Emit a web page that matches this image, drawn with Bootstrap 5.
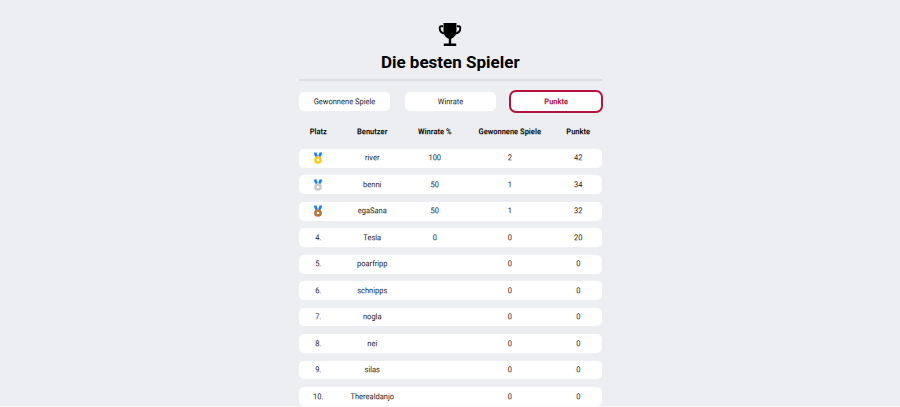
<!DOCTYPE html>
<html lang="de">
<head>
<meta charset="utf-8">
<meta name="viewport" content="width=device-width, initial-scale=1">
<title>Die besten Spieler</title>
<link href="https://cdn.jsdelivr.net/npm/bootstrap@5.3.0/dist/css/bootstrap.min.css" rel="stylesheet">
<style>
html, body { height: 407px; overflow: hidden; background: #fafafb; }
body { font-family: Roboto, sans-serif; font-size: 7.5px; color: #222; }
.page { height: 406px; background: #edeef2; padding-top: 22px; overflow: hidden; }
.board { width: 302.5px; margin-left: 299px; }
.trophy { display: block; margin: 0 auto; width: 24px; height: 25px; }
.title { font-size: 17px; line-height: 20px; margin: 5px 0 0; padding-bottom: 7px; font-weight: 700; color: #000; }
.rule { height: 2px; background: #dcdde1; }
.tabs { margin-top: 11.2px; height: 19px; }
.tab-btn { --bs-btn-bg: #fff; --bs-btn-color: #222; --bs-btn-hover-bg: #fff; width: 91px; height: 19px; padding: 0; font-size: 7.5px; line-height: 18px; border-radius: 5px; border: 0; }
.tab-btn.chosen { color: #b3133d; font-weight: 700; background: #fff; box-shadow: 0 0 0 2px #b3133d; width: 90.5px; margin-right: .5px; }
.tab-btn span, .line .txt { display: block; transform: rotate(.03deg) scaleY(1.09); }
.line { display: grid; grid-template-columns: 38.5px 68.5px 57.5px 91.5px 46.5px; align-items: center; text-align: center; height: 18.8px; }
.heads { margin-top: 11.8px; font-weight: 700; color: #111; height: 18px; }
.rows { margin-top: 7.8px; gap: 7.7px; }
.rows .line { background: #fff; border-radius: 5px; line-height: 18px; }
.medal { display: block; margin: 0 auto; width: 10px; height: 12px; }
.gold { color: #fcca17; } .silver { color: #c8c8ca; } .bronze { color: #b77435; }
</style>
</head>
<body>
<svg class="d-none">
<symbol id="medal" viewBox="0 0 10 12"><path d="M.8.7 3.300.3 4.700 3.700 3.700 5 2.100 4.600ZM9.200.7 6.700.3 5.300 3.700 6.300 5 7.900 4.600Z" fill="#1380f5"/><circle cx="5" cy="8" r="2.600" fill="#fff" stroke="currentColor" stroke-width="2.500"/></symbol>
</svg>
<main class="page">
<div class="board">
<svg class="trophy" viewBox="0 0 24 25"><path d="M5 4.300H3Q1.700 4.300 1.700 6C1.700 9.500 3.500 11.300 7.500 11.800M19 4.300H21Q22.300 4.300 22.300 6C22.300 9.500 20.500 11.300 16.500 11.800" fill="none" stroke="#000" stroke-width="1.900"/><path d="M5.500 1h13v7c0 4.500-2 7.800-5.300 8.700V21.500h5V24H5.800v-2.500h5v-4.800C7.500 15.800 5.500 12.500 5.500 8Z" fill="#000"/></svg>
<h1 class="title text-center">Die besten Spieler</h1>
<div class="rule"></div>
<div class="tabs d-flex justify-content-between">
<button class="btn tab-btn" type="button"><span>Gewonnene Spiele</span></button>
<button class="btn tab-btn" type="button"><span>Winrate</span></button>
<button class="btn tab-btn chosen" type="button"><span>Punkte</span></button>
</div>
<div class="line heads"><span class="txt">Platz</span><span class="txt">Benutzer</span><span class="txt">Winrate %</span><span class="txt">Gewonnene Spiele</span><span class="txt">Punkte</span></div>
<div class="rows d-flex flex-column">
<div class="line"><span><svg class="medal gold"><use href="#medal"/></svg></span><span class="txt">river</span><span class="txt">100</span><span class="txt">2</span><span class="txt">42</span></div>
<div class="line"><span><svg class="medal silver"><use href="#medal"/></svg></span><span class="txt">benni</span><span class="txt">50</span><span class="txt">1</span><span class="txt">34</span></div>
<div class="line"><span><svg class="medal bronze"><use href="#medal"/></svg></span><span class="txt">egaSana</span><span class="txt">50</span><span class="txt">1</span><span class="txt">32</span></div>
<div class="line"><span class="txt">4.</span><span class="txt">Tesla</span><span class="txt">0</span><span class="txt">0</span><span class="txt">20</span></div>
<div class="line"><span class="txt">5.</span><span class="txt">poarfripp</span><span></span><span class="txt">0</span><span class="txt">0</span></div>
<div class="line"><span class="txt">6.</span><span class="txt">schnipps</span><span></span><span class="txt">0</span><span class="txt">0</span></div>
<div class="line"><span class="txt">7.</span><span class="txt">nogla</span><span></span><span class="txt">0</span><span class="txt">0</span></div>
<div class="line"><span class="txt">8.</span><span class="txt">nei</span><span></span><span class="txt">0</span><span class="txt">0</span></div>
<div class="line"><span class="txt">9.</span><span class="txt">silas</span><span></span><span class="txt">0</span><span class="txt">0</span></div>
<div class="line"><span class="txt">10.</span><span class="txt">Therealdanjo</span><span></span><span class="txt">0</span><span class="txt">0</span></div>
</div>
</div>
</main>
<script src="https://cdn.jsdelivr.net/npm/bootstrap@5.3.0/dist/js/bootstrap.bundle.min.js"></script>
</body>
</html>
